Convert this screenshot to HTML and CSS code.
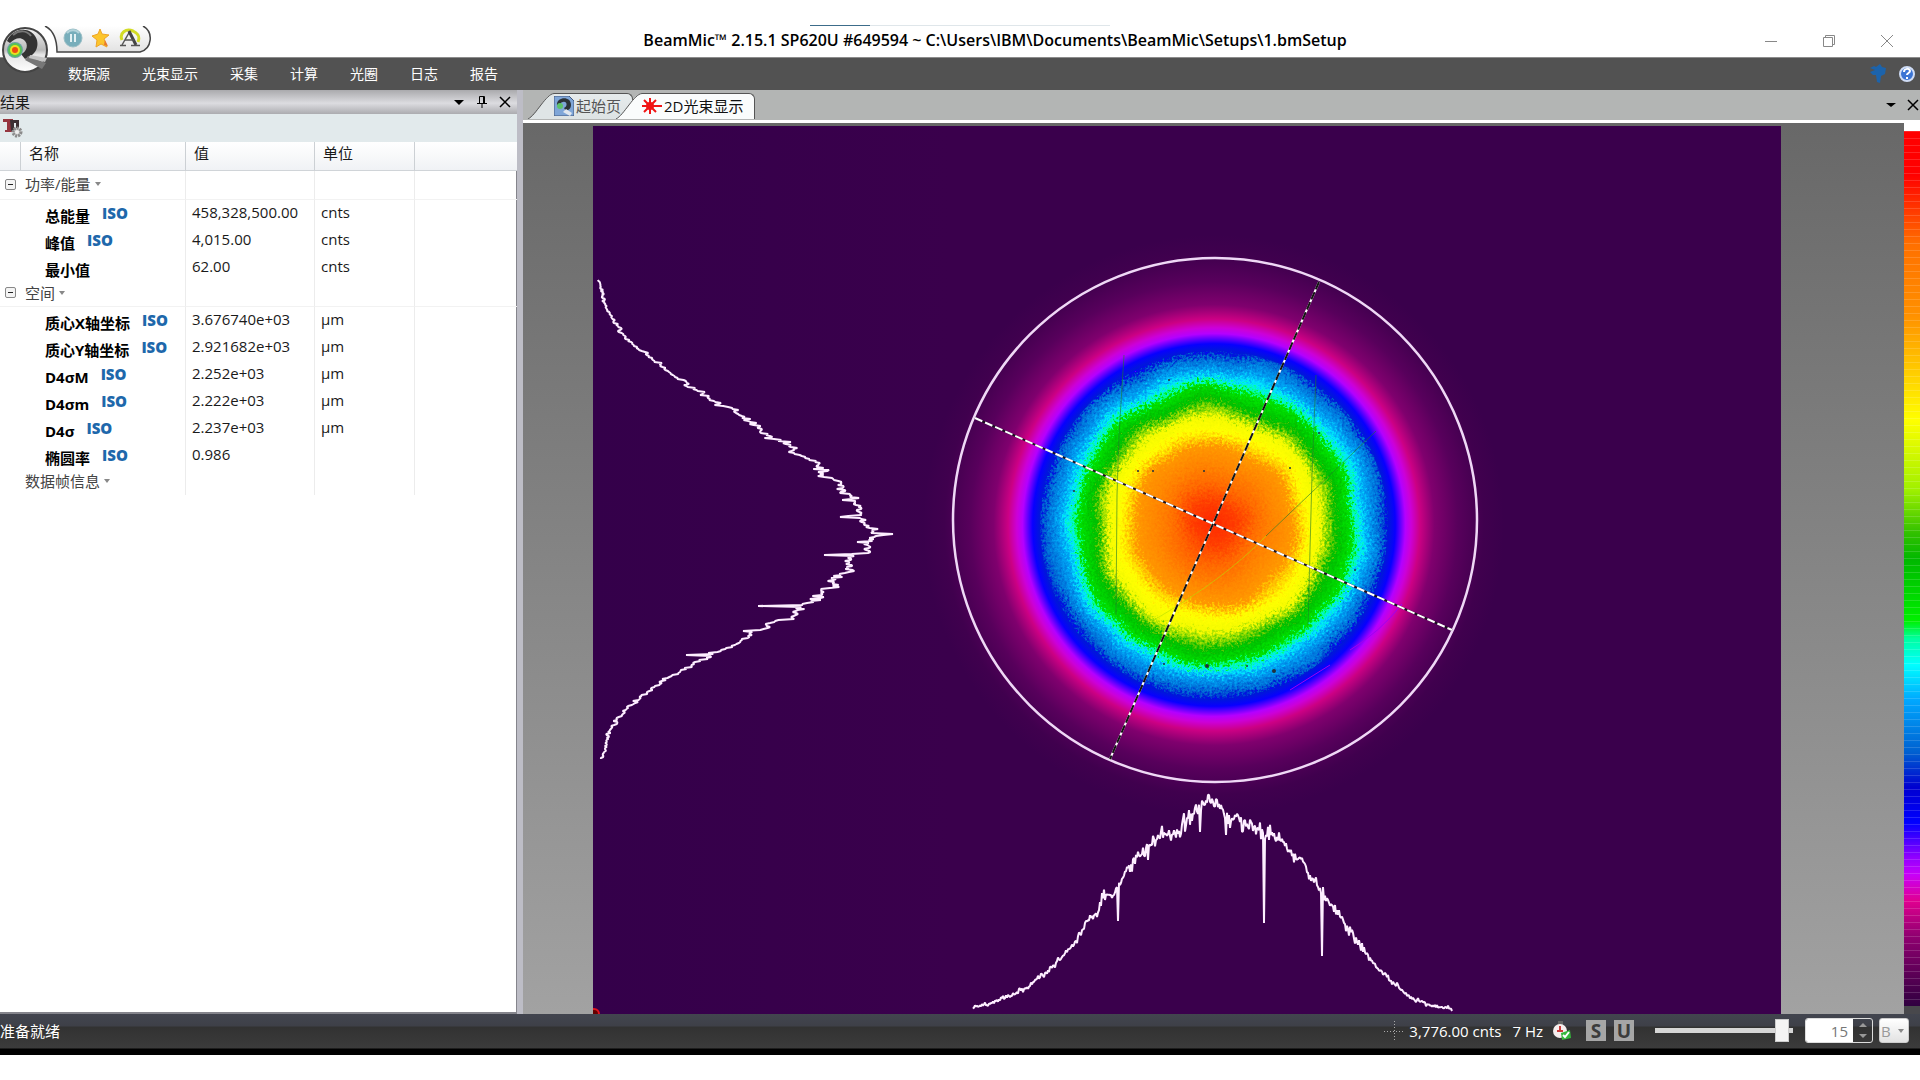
FILE: index.html
```html
<!DOCTYPE html>
<html lang="zh-CN">
<head>
	<meta charset="utf-8">
	<title>BeamMic</title>
	<link rel="stylesheet" href="styles.css">
</head>
<body>
	<div class="top-strip"><div class="progress"></div></div>

	<header class="titlebar">
		<button class="logo" aria-label="BeamMic">
			<svg width="48" height="48" viewBox="0 0 48 48">
				<defs>
					<linearGradient id="disc" x1="0" y1="0" x2="0" y2="1">
						<stop offset="0" stop-color="#f4f4f4"/>
						<stop offset="0.5" stop-color="#b8b8b8"/>
						<stop offset="0.6" stop-color="#e4e4e4"/>
						<stop offset="1" stop-color="#ffffff"/>
					</linearGradient>
				</defs>
				<circle cx="24" cy="24" r="22" fill="url(#disc)" stroke="#444" stroke-width="2"/>
				<path d="M6 15C10 5 22 1 30 6c9 6 8 18 1 23l-7 4-4-5c6-2 8-10 3-14-4-3-9-2-14 3z" fill="#333"/>
				<path d="M12 9c6-5 14-5 18 1" fill="none" stroke="#777" stroke-width="2"/>
				<path d="M27 30l18 7-4 6-17-9z" fill="#777"/>
				<path d="M29 29l17 3-2 4-16-4z" fill="#c4c4c4"/>
				<circle cx="14" cy="24" r="8" fill="#6a9fa6"/>
				<circle cx="14" cy="24" r="7" fill="#57c353"/>
				<circle cx="14" cy="24" r="5" fill="#e9e01f"/>
				<circle cx="14" cy="24" r="3" fill="#ee4a12"/>
			</svg>
		</button>
		<div class="quick">
			<svg class="quick-frame" width="108" height="28" viewBox="0 0 108 28">
				<defs>
					<linearGradient id="frame" x1="0" y1="0" x2="0" y2="1">
						<stop offset="0" stop-color="#fff"/>
						<stop offset="1" stop-color="#e2e2e2"/>
					</linearGradient>
				</defs>
				<path d="M1 0C9 4 13 14 13 26H96C108 23 110 6 99 0" fill="url(#frame)" stroke="#444" stroke-width="1.5"/>
			</svg>
			<button class="quick-btn" aria-label="暂停">
				<svg width="20" height="20" viewBox="0 0 20 20">
					<circle cx="10" cy="10" r="9" fill="#78aebb" stroke="#9bbfc6"/>
					<path d="M4 5a8 8 0 0 1 12 0" stroke="#b3d3da" fill="none" stroke-width="2"/>
					<path d="M8 6v8M12 6v8" stroke="#e4f1f3" stroke-width="2"/>
				</svg>
			</button>
			<button class="quick-btn" aria-label="收藏">
				<svg width="20" height="20" viewBox="0 0 20 20">
					<path d="M9 1l2 5 7 1-5 4 3 8-6-3-5 3 1-7-5-4 6-2z" fill="#fcc52c" stroke="#eda428"/>
					<path d="M14 12l3 6-4-1z" fill="#e8792d"/>
				</svg>
			</button>
			<button class="quick-btn" aria-label="自动校准">
				<svg width="22" height="20" viewBox="0 0 22 20">
					<path d="M3 12C0 5 7 0 14 3c6 3 7 6 5 11" fill="none" stroke="#d3dc25" stroke-width="3"/>
					<path d="M3 17L11 3" fill="none" stroke="#555" stroke-width="1.5"/>
					<path d="M10 3l7 14" fill="none" stroke="#444" stroke-width="3"/>
					<path d="M6 12h9M1 17.5h6M12 17.5h9" fill="none" stroke="#555" stroke-width="1.5"/>
				</svg>
			</button>
		</div>
		<h1 class="title">BeamMic™ 2.15.1 SP620U #649594 ~ C:\Users\IBM\Documents\BeamMic\Setups\1.bmSetup</h1>
		<div class="window-buttons">
			<button aria-label="最小化"><svg width="14" height="14" viewBox="0 0 14 14"><path d="M1 7.5h12"/></svg></button>
			<button aria-label="还原"><svg width="14" height="14" viewBox="0 0 14 14"><path d="M1.5 3.5h9v9h-9zM3.5 3.5v-2h9v9h-2"/></svg></button>
			<button aria-label="关闭"><svg width="14" height="14" viewBox="0 0 14 14"><path d="M1 1l12 12M13 1L1 13"/></svg></button>
		</div>
	</header>

	<nav class="menu">
		<button>数据源</button>
		<button>光束显示</button>
		<button>采集</button>
		<button>计算</button>
		<button>光圈</button>
		<button>日志</button>
		<button>报告</button>
		<div class="menu-help">
			<button aria-label="选项"><svg width="18" height="20" viewBox="0 0 18 20"><path d="M1 4l4-2 2 1 4-3 2 3 4 1-1 6-4 2-1 7-3-1-1-7H4L1 8l5-2z" fill="#1c63ab"/></svg></button>
			<button aria-label="帮助">
				<svg width="18" height="18" viewBox="0 0 18 18">
					<circle cx="9" cy="9" r="7" fill="#3b74d4" stroke="#cfdcf5" stroke-width="2"/>
					<path d="M6 7c0-4 6-4 6-1 0 2-3 2-3 4M9 12v2" fill="none" stroke="#fff" stroke-width="2"/>
				</svg>
			</button>
		</div>
	</nav>

	<main class="workspace">
		<section class="results">
			<div class="panel-head">
				<h2>结果</h2>
				<button aria-label="菜单"><svg width="12" height="12" viewBox="0 0 12 12"><path d="M1 4h10L6 9z" fill="#000"/></svg></button>
				<button aria-label="固定"><svg width="12" height="12" viewBox="0 0 12 12"><path d="M3.5 7V.5h5V7M7.5 1v6M1 7.5h10M6 8v4" fill="none" stroke="#000"/></svg></button>
				<button aria-label="关闭"><svg width="12" height="12" viewBox="0 0 12 12"><path d="M1 1l10 10M11 1L1 11" stroke="#000" stroke-width="1.5"/></svg></button>
			</div>
			<div class="panel-tools">
				<button aria-label="结果设置">
					<svg width="20" height="20" viewBox="0 0 20 20">
						<path d="M0 1h10v3H8v8h2v2H2v-2h2V4H0z" fill="#963640"/>
						<path d="M7 2h9v8h-3V5h-2v8H8z" fill="#3c3034"/>
						<circle cx="14" cy="14" r="4" fill="#c2c2c2" stroke="#8a8a8a" stroke-width="3" stroke-dasharray="2 1"/>
						<circle cx="14" cy="14" r="2" fill="#eee"/>
					</svg>
				</button>
			</div>
			<table class="results-table">
				<colgroup><col class="c-exp"><col class="c-name"><col class="c-value"><col class="c-unit"><col></colgroup>
				<thead>
					<tr><th></th><th>名称</th><th>值</th><th>单位</th><th></th></tr>
				</thead>
				<tbody>
					<tr class="group first"><td><button class="expander" aria-label="折叠"></button></td><td><span>功率/能量</span></td><td></td><td></td><td></td></tr>
					<tr><td></td><td class="name">总能量<b>ISO</b></td><td>458,328,500.00</td><td>cnts</td><td></td></tr>
					<tr><td></td><td class="name">峰值<b>ISO</b></td><td>4,015.00</td><td>cnts</td><td></td></tr>
					<tr><td></td><td class="name">最小值</td><td>62.00</td><td>cnts</td><td></td></tr>
					<tr class="group"><td><button class="expander" aria-label="折叠"></button></td><td><span>空间</span></td><td></td><td></td><td></td></tr>
					<tr><td></td><td class="name">质心X轴坐标<b>ISO</b></td><td>3.676740e+03</td><td>μm</td><td></td></tr>
					<tr><td></td><td class="name">质心Y轴坐标<b>ISO</b></td><td>2.921682e+03</td><td>μm</td><td></td></tr>
					<tr><td></td><td class="name">D4σM<b>ISO</b></td><td>2.252e+03</td><td>μm</td><td></td></tr>
					<tr><td></td><td class="name">D4σm<b>ISO</b></td><td>2.222e+03</td><td>μm</td><td></td></tr>
					<tr><td></td><td class="name">D4σ<b>ISO</b></td><td>2.237e+03</td><td>μm</td><td></td></tr>
					<tr><td></td><td class="name">椭圆率<b>ISO</b></td><td>0.986</td><td></td><td></td></tr>
					<tr class="group last"><td></td><td><span>数据帧信息</span></td><td></td><td></td><td></td></tr>
				</tbody>
			</table>
		</section>

		<section class="display">
			<div class="tabs">
				<button class="tab">
					<svg class="slant" width="26" height="26" viewBox="0 0 26 26"><path d="M0 26C10 22 16 1 26 .5V26z" fill="#dfe5e6"/><path d="M0 26C8 22 18 1 26 .5" fill="none" stroke="#555"/></svg>
					<span class="tab-body">
						<svg width="20" height="20" viewBox="0 0 20 20">
							<path d="M0 0h15l5 5v15H0z" fill="#7fa6d8" stroke="#44597e"/>
							<path d="M3 9c-1-8 14-10 14 0 0 4-3 5-5 6l-2-3c4-2 3-7-1-6-2 0-3 2-3 4z" fill="#2c3338"/>
							<circle cx="6" cy="10" r="3" fill="#5cc36a"/>
							<path d="M12 13l6 4-2 3-7-4z" fill="#e0e6ee"/>
						</svg>
						起始页
					</span>
				</button>
				<button class="tab active">
					<svg class="slant" width="26" height="26" viewBox="0 0 26 26"><path d="M0 26C10 22 16 1 26 .5V26z" fill="#fafcfc"/><path d="M0 26C8 22 18 1 26 .5" fill="none" stroke="#555"/></svg>
					<span class="tab-body">
						<svg width="20" height="20" viewBox="0 0 20 20"><path d="M0 10h20M8 2v16M2 4l12 12M14 4L2 16" stroke="#f01414" stroke-width="2"/><circle cx="8" cy="10" r="4" fill="#f01414"/></svg>
						2D光束显示
					</span>
				</button>
				<div class="tab-tools">
					<button aria-label="窗口列表"><svg width="12" height="12" viewBox="0 0 12 12"><path d="M1 4h10L6 8z" fill="#000"/></svg></button>
					<button aria-label="关闭"><svg width="12" height="12" viewBox="0 0 12 12"><path d="M1 1l10 10M11 1L1 11" stroke="#000" stroke-width="1.5"/></svg></button>
				</div>
			</div>
			<div class="view">
				<svg class="beam" viewBox="593 126 1188 888" preserveAspectRatio="xMidYMid slice">
					<defs>
						<radialGradient id="spot" gradientUnits="userSpaceOnUse" cx="1214" cy="525" r="290">
							<stop offset="0" stop-color="#ff2800"/>
							<stop offset="0.07" stop-color="#ff3c00"/>
							<stop offset="0.14" stop-color="#ff6c00"/>
							<stop offset="0.2" stop-color="#ff8400"/>
							<stop offset="0.27" stop-color="#ff9800"/>
							<stop offset="0.31" stop-color="#ffe400"/>
							<stop offset="0.33" stop-color="#ffff00"/>
							<stop offset="0.37" stop-color="#f4fa00"/>
							<stop offset="0.405" stop-color="#60cc00"/>
							<stop offset="0.425" stop-color="#00bc00"/>
							<stop offset="0.475" stop-color="#00e400"/>
							<stop offset="0.487" stop-color="#00ff9c"/>
							<stop offset="0.505" stop-color="#00e8ff"/>
							<stop offset="0.53" stop-color="#00a4f4"/>
							<stop offset="0.575" stop-color="#0068d4"/>
							<stop offset="0.6" stop-color="#0018d8"/>
							<stop offset="0.625" stop-color="#0800ff"/>
							<stop offset="0.66" stop-color="#b400ff"/>
							<stop offset="0.68" stop-color="#cc00d8"/>
							<stop offset="0.71" stop-color="#cc0084"/>
							<stop offset="0.76" stop-color="#80006e"/>
							<stop offset="0.84" stop-color="#58005c"/>
							<stop offset="0.93" stop-color="#40004e"/>
							<stop offset="1" stop-color="#3a004c"/>
						</radialGradient>
						<linearGradient id="field">
							<stop offset="0" stop-color="#34004a"/>
							<stop offset="0.3" stop-color="#3a004c"/>
							<stop offset="1" stop-color="#3a004c"/>
						</linearGradient>
						<!-- camera noise along the colour bands -->
						<filter id="grain" filterUnits="userSpaceOnUse" x="910" y="220" width="610" height="610" color-interpolation-filters="sRGB">
							<feTurbulence type="fractalNoise" baseFrequency="0.018" numOctaves="2" seed="4" result="wave"/>
							<feDisplacementMap in="SourceGraphic" in2="wave" scale="16" xChannelSelector="R" yChannelSelector="G" result="waved"/>
							<feTurbulence type="fractalNoise" baseFrequency="0.4" numOctaves="3" seed="9" result="fine"/>
							<feDisplacementMap in="waved" in2="fine" scale="22" xChannelSelector="R" yChannelSelector="G"/>
						</filter>
						<clipPath id="core"><circle cx="1214" cy="525" r="174"/></clipPath>
					</defs>
					<rect x="593" y="126" width="1188" height="888" fill="url(#field)"/>
					<circle cx="1214" cy="525" r="290" fill="url(#spot)"/>
					<g clip-path="url(#core)"><circle cx="1214" cy="525" r="290" fill="url(#spot)" filter="url(#grain)"/></g>

					<!-- scratches and dust on the sensor -->
					<g fill="none" stroke="#1f7a2a" stroke-opacity="0.6">
						<path d="M1124 355l-5 80-2 60-1 120"/>
						<path d="M1316 375l-4 100-4 150"/>
						<path d="M1376 431l-110 105"/>
						<path d="M1266 536q-40 42-112 84" stroke="#b8e000"/>
						<path d="M1350 650q30-18 52-46" stroke="#a000f0" stroke-opacity="1"/>
						<path d="M1290 690l40-25" stroke="#a000f0" stroke-opacity="1"/>
					</g>
					<g fill="#22303c">
						<circle cx="1204" cy="471" r="1"/><circle cx="1138" cy="471" r="1"/><circle cx="1153" cy="471" r="1"/>
						<circle cx="1074" cy="491" r="1"/><circle cx="1207" cy="666" r="2"/><circle cx="1164" cy="664" r="1"/>
						<circle cx="1247" cy="666" r="1"/><circle cx="1355" cy="570" r="1"/><circle cx="1274" cy="671" r="2"/>
						<circle cx="1169" cy="380" r="1"/><circle cx="1319" cy="433" r="1"/><circle cx="1290" cy="468" r="1"/>
					</g>

					<circle cx="1215" cy="520" r="262" fill="none" stroke="#efd8f6" stroke-width="2.5"/>
					<g stroke-width="2">
						<path d="M975 418L1452 630" stroke="#1a1020"/>
						<path d="M975 418L1452 630" stroke="#fff" stroke-dasharray="8 3"/>
						<path d="M1319 282L1110 759" stroke="#fff"/>
						<path d="M1319 282L1110 759" stroke="#141414" stroke-dasharray="8 3"/>
					</g>
					<path class="profile" id="profile-y"/>
					<path class="profile" id="profile-x"/>
					<circle cx="594" cy="1014" r="5" fill="#600" stroke="#e0141c" stroke-width="2"/>
				</svg>
				<div class="palette"></div>
			</div>
		</section>
	</main>

	<footer class="status">
		<span class="ready">准备就绪</span>
		<svg width="20" height="20" viewBox="0 0 20 20"><path d="M0 10.5h20M10.5 0v20" stroke="#aaa" stroke-dasharray="1 2"/></svg>
		<span class="cursor-value">3,776.00 cnts</span>
		<span class="rate">7 Hz</span>
		<svg class="clock" width="20" height="22" viewBox="0 0 20 22">
			<path d="M6 1h5v4H6z" fill="#666"/>
			<circle cx="8" cy="11" r="7" fill="#f6eeee"/>
			<path d="M8 6v5M5 11h6" stroke="#cc3a3a" stroke-width="2"/>
			<path d="M9 13l9-3 1 8-9 2z" fill="#35b83c"/>
			<path d="M11 15l2 2 4-5" fill="none" stroke="#fff" stroke-width="2"/>
		</svg>
		<button class="flag">S</button>
		<button class="flag">U</button>
		<input class="slider" type="range" min="0" max="100" value="97" aria-label="帧缓存位置">
		<div class="frame-box">
			<input type="text" value="15" aria-label="帧">
			<div class="spin">
				<button aria-label="增加"><svg width="8" height="5" viewBox="0 0 8 5"><path d="M0 5l4-4 4 4z"/></svg></button>
				<button aria-label="减少"><svg width="8" height="5" viewBox="0 0 8 5"><path d="M0 0l4 4 4-4z"/></svg></button>
			</div>
		</div>
		<div class="buffer">
			<select aria-label="缓存"><option>B</option></select>
			<svg width="6" height="4" viewBox="0 0 6 4"><path d="M0 0h6L3 4z" fill="#888"/></svg>
		</div>
	</footer>
	<script src="profiles.js"></script>
</body>
</html>
```
FILE: styles.css
```css
* {
	box-sizing: border-box;
}

body {
	margin: 0;
	padding-bottom: 25px;
	height: 100vh;
	display: flex;
	flex-direction: column;
	background: #fff;
	color: #1a1a1a;
	font: 15px/20px "Open Sans", "Noto Sans CJK SC", sans-serif;
	overflow: hidden;
}

button {
	padding: 0;
	border: none;
	background: none;
	color: inherit;
	font: inherit;
}

svg {
	display: block;
	flex: none;
}

/* title bar */
.top-strip {
	height: 26px;
	display: flex;
	justify-content: center;
	align-items: flex-end;
}

.progress {
	width: 300px;
	height: 1px;
	background: linear-gradient(to right, #3c6c8a 20%, #dfe6ea 20%);
}

.titlebar {
	position: relative;
	height: 31px;
	display: flex;
	align-items: center;
}

.logo {
	position: absolute;
	left: 1px;
	top: 0;
	z-index: 2;
}

.quick {
	position: relative;
	align-self: flex-start;
	width: 152px;
	height: 26px;
	padding: 0 0 2px 63px;
	display: flex;
	align-items: center;
	gap: 8px;
}

.quick-frame {
	position: absolute;
	left: 44px;
	top: 0;
}

.quick-btn {
	position: relative;
}

.title {
	flex: 1;
	margin: 0;
	padding: 0 0 4px 96px;
	text-align: center;
	font-size: 16px;
	font-weight: 600;
	color: #000;
	white-space: nowrap;
}

.window-buttons {
	display: flex;
	padding: 0 4px 2px 0;
}

.window-buttons button {
	width: 58px;
	height: 29px;
	display: flex;
	align-items: center;
	justify-content: center;
}

.window-buttons path {
	fill: none;
	stroke: #888;
}

/* menu */
.menu {
	height: 33px;
	padding: 0 4px 0 68px;
	display: flex;
	align-items: center;
	gap: 32px;
	background: #525252;
	border-top: 1px solid #8c8c8c;
	color: #fff;
	font-size: 14px;
}

.menu-help {
	margin-left: auto;
	display: flex;
	gap: 11px;
}

/* workspace */
.workspace {
	flex: 1;
	min-height: 0;
	display: flex;
}

.results {
	width: 523px;
	border-right: 6px solid #bdbdc6;
	box-shadow: inset -1px -2px #85858c;
}

.panel-head {
	height: 24px;
	padding-right: 6px;
	display: flex;
	align-items: center;
	gap: 11px;
	background: linear-gradient(#aaaaad, #dcdce0 55%, #acacb0);
}

.panel-head h2 {
	flex: 1;
	margin: 0;
	font-size: 15px;
	font-weight: 400;
}

.panel-tools {
	height: 28px;
	padding: 4px 3px;
	background: #e2eaec;
}

.results-table {
	width: 100%;
	table-layout: fixed;
	border-collapse: separate;
	border-spacing: 0;
}

.c-exp {
	width: 21px;
}

.c-name {
	width: 165px;
}

.c-value {
	width: 129px;
}

.c-unit {
	width: 100px;
}

.results-table th {
	height: 29px;
	padding: 0 8px 6px;
	text-align: left;
	font-weight: 400;
	background: linear-gradient(#fff, #f0f2f5);
	border-right: 1px solid #ccd0d4;
	border-bottom: 1px solid #d0d4d8;
}

.results-table td {
	height: 27px;
	padding: 0 6px 3px;
	line-height: 20px;
	border-right: 1px solid #ececec;
}

.results-table th:last-child,
.results-table td:last-child,
.results-table td:first-child {
	border-right: none;
}

.results-table .name {
	padding: 4px 0 0 24px;
	font-weight: 700;
	color: #000;
	white-space: nowrap;
}

.name b {
	margin-left: 12px;
	color: #1e68ab;
	vertical-align: 3px;
	line-height: 10px;
}

.results-table .group td {
	height: 26px;
	padding: 0 4px 2px;
	color: #444;
	border-bottom: 1px solid #f2f2f2;
}

.results-table .first td {
	height: 29px;
}

.results-table .last td {
	border-bottom: none;
}

.group span::after {
	content: "";
	display: inline-block;
	margin-left: 4px;
	border: 3px solid transparent;
	border-top: 4px solid #888;
	vertical-align: 1px;
}

.expander {
	display: block;
	width: 11px;
	height: 11px;
	margin-left: 1px;
	border: 1px solid #888;
	border-radius: 2px;
	background: linear-gradient(#222, #222) center / 5px 1px no-repeat #f4f4f4;
}

/* tabs */
.display {
	flex: 1;
	min-width: 0;
	display: flex;
	flex-direction: column;
}

.tabs {
	height: 33px;
	padding: 3px 1px 0 5px;
	display: flex;
	align-items: flex-start;
	background: #b3b5b4;
	border-bottom: 3px solid #fff;
}

.tab {
	height: 27px;
	display: flex;
	color: #555;
}

.tab.active {
	margin-left: -17px;
	color: #111;
}

.tab-body {
	height: 26px;
	padding: 0 11px 2px 0;
	display: flex;
	align-items: center;
	gap: 2px;
	background: linear-gradient(#e6ebec, #dde3e4);
	border-top: 1px solid #555;
	border-right: 1px solid #555;
	border-radius: 0 6px 0 0;
}

.active .tab-body {
	background: #fafcfc;
}

.tab-tools {
	margin-left: auto;
	padding-top: 6px;
	display: flex;
	gap: 10px;
}

.view {
	flex: 1;
	min-height: 0;
	display: flex;
	background: linear-gradient(#686868, #a2a2a2);
}

.beam {
	flex: 1;
	min-width: 0;
	height: calc(100% - 3px);
	margin: 3px 123px 0 70px;
}

.profile {
	fill: none;
	stroke: #fdeeff;
	stroke-width: 2;
	stroke-linejoin: bevel;
}

.palette {
	width: 16px;
	border-top: 8px solid #fff;
	border-bottom: 8px solid #48484c;
	background:
		repeating-linear-gradient(rgba(255, 255, 255, 0.15) 0 1px, transparent 1px 7px),
		linear-gradient(#f00 5%, #ff7000 13%, #ff9000 21%, #ff0 33%, #a0f000 41%, #30c000 46%, #00b800 49%, #00f000 56%, #00ffa0 58%, #0ff 61%, #00a8ff 65%, #0060d0 71%, #0000d0 75%, #00f 79%, #9000ff 83%, #c800f8 85%, #e00090 88%, #900070 92%, #300040);
}

/* status bar */
.status {
	height: 41px;
	padding: 0 11px 8px 0;
	display: flex;
	align-items: center;
	background: linear-gradient(#42454f, #3e4048 12px, #323232 13px, #3b3b3b 34px, #000 35px);
	color: #fff;
}

.ready {
	flex: 1;
}

.cursor-value {
	margin: 0 11px 0 5px;
}

.clock {
	margin: 0 14px 0 9px;
}

.flag {
	width: 20px;
	height: 21px;
	margin-right: 8px;
	background: #a6a6a6;
	color: #3c3c3c;
	font-size: 19px;
	font-weight: 700;
}

.slider {
	appearance: none;
	width: 138px;
	height: 24px;
	margin: 0 12px 0 13px;
	background: linear-gradient(#d6d6d6, #d6d6d6) center / 100% 5px no-repeat;
}

.slider::-webkit-slider-thumb {
	appearance: none;
	width: 14px;
	height: 23px;
	background: #f4f4f4;
	border: 1px solid #ccc;
}

.frame-box {
	width: 68px;
	height: 25px;
	display: flex;
	border: 1px solid #ddd;
	border-radius: 3px;
	overflow: hidden;
}

.frame-box input {
	flex: 1;
	min-width: 0;
	padding: 0 5px;
	border: none;
	background: #fff;
	color: #777;
	font: inherit;
	text-align: right;
}

.spin {
	width: 19px;
	display: flex;
	flex-direction: column;
}

.spin button {
	flex: 1;
	display: flex;
	align-items: center;
	justify-content: center;
}

.spin path {
	fill: #999;
}

.buffer {
	width: 30px;
	height: 25px;
	margin-left: 6px;
	padding: 0 4px 0 1px;
	display: flex;
	align-items: center;
	background: linear-gradient(#fff, #e2e2e2);
	border: 1px solid #ccc;
	border-radius: 3px;
}

.buffer select {
	appearance: none;
	flex: 1;
	min-width: 0;
	padding: 0;
	border: none;
	background: none;
	color: #999;
	font: inherit;
}
```
FILE: profiles.js
```js
var seed = 7;

/* repeatable noise between -1 and 1 */
function noise() {
	seed = (seed * 16807) % 2147483647;
	return seed / 1073741823.5 - 1;
}

/* points are [position, level], spikes are [position, level] */
function trace(points, spikes, peak, depth) {
	var out = [];
	for (var i = 0; i < points.length - 1; i++) {
		var a = points[i], b = points[i + 1];
		for (var p = a[0]; p < b[0]; p += 1) {
			var level = a[1] + (b[1] - a[1]) * (p - a[0]) / (b[0] - a[0]);
			var near = Math.max(0, 1 - Math.abs(level - peak) / depth);
			var n = noise();
			level += n * n * n * (2 + near * 9) + noise() * (1 + near * 2);
			out.push([p, level]);
		}
	}
	spikes.forEach(function(s) {
		out.forEach(function(o) {
			if (o[0] === s[0]) {
				o[1] = s[1];
			}
		});
	});
	return out;
}

var vertical = trace([
	[280, 599], [298, 603], [312, 608], [325, 617], [337, 625], [350, 640], [360, 653], [375, 673],
	[390, 697], [403, 717], [408, 730], [418, 742], [427, 757], [434, 763], [443, 787], [453, 795],
	[463, 815], [475, 825], [485, 843], [493, 848], [508, 857], [518, 858], [527, 868], [535, 878],
	[542, 872], [552, 863], [558, 848], [570, 848], [580, 835], [590, 828], [602, 810], [608, 797],
	[617, 795], [622, 773], [632, 757], [643, 737], [655, 710], [667, 690], [677, 670], [695, 643],
	[713, 623], [730, 610], [760, 602]
], [[517, 840], [534, 893], [542, 857], [555, 824], [606, 758], [631, 743], [655, 686]], 878, 280);

var horizontal = trace([
	[973, 1007], [988, 1004], [1010, 996], [1027, 987], [1038, 979], [1048, 970], [1060, 959],
	[1075, 943], [1087, 920], [1097, 913], [1103, 898], [1115, 893], [1120, 882], [1127, 868],
	[1140, 857], [1153, 843], [1157, 837], [1177, 833], [1190, 813], [1198, 812], [1205, 803],
	[1217, 804], [1227, 817], [1237, 817], [1247, 827], [1260, 828], [1267, 833], [1283, 841],
	[1295, 857], [1303, 860], [1310, 877], [1320, 887], [1327, 898], [1337, 912], [1353, 935],
	[1373, 963], [1393, 983], [1410, 997], [1433, 1006], [1453, 1009]
], [[1118, 921], [1200, 832], [1226, 835], [1264, 923], [1322, 956]], 803, 205);

document.getElementById("profile-y").setAttribute("d", "M" + vertical.map(function(o) {
	return o[1].toFixed(1) + " " + o[0];
}).join("L"));

document.getElementById("profile-x").setAttribute("d", "M" + horizontal.map(function(o) {
	return o[0] + " " + o[1].toFixed(1);
}).join("L"));
```
